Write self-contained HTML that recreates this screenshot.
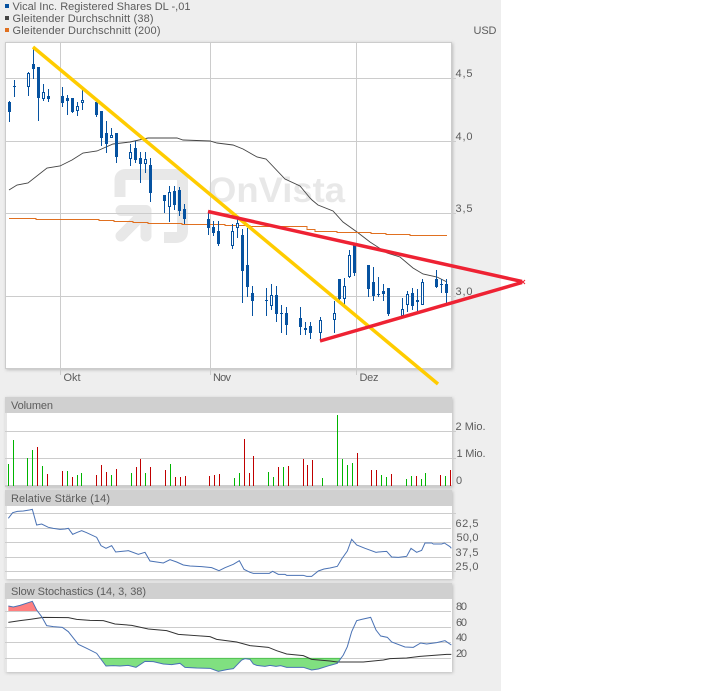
<!DOCTYPE html>
<html><head><meta charset="utf-8"><style>
html,body{margin:0;padding:0;background:#fff}
svg{display:block}
text{font-family:"Liberation Sans",sans-serif;font-size:11px;fill:#5c5c5c}
</style></head><body>
<svg width="725" height="691" viewBox="0 0 725 691" xmlns="http://www.w3.org/2000/svg">
<defs><filter id="s" x="-5%" y="-5%" width="110%" height="110%"><feDropShadow dx="1" dy="1" stdDeviation="1.5" flood-color="#999" flood-opacity=".6"/></filter></defs>
<rect width="501" height="691" fill="#eee"/>

<!-- legend -->
<rect x="5" y="4" width="4" height="4" fill="#0652a0"/>
<rect x="5" y="16" width="4" height="4" fill="#444"/>
<rect x="5" y="28" width="4" height="4" fill="#e07020"/>
<text x="12.5" y="10" textLength="178" lengthAdjust="spacing">Vical Inc. Registered Shares DL -,01</text>
<text x="12.5" y="22" textLength="141" lengthAdjust="spacing">Gleitender Durchschnitt (38)</text>
<text x="12.5" y="34" textLength="148" lengthAdjust="spacing">Gleitender Durchschnitt (200)</text>
<text x="473.5" y="34" textLength="23" lengthAdjust="spacing">USD</text>

<!-- main panel -->
<rect x="5.5" y="42.5" width="446" height="326" fill="#fff" stroke="#ccc" filter="url(#s)"/>
<g fill="none" stroke="#e8e8e8" stroke-width="11">
<path d="M120 197V180Q120 174.500 126 174.500H176Q182.500 174.500 182.500 181V231Q182.500 237.500 176 237.500H164" stroke-linecap="butt"/>
<path d="M121 210.500H146V236M146 211L121 236" stroke-linecap="round" stroke-linejoin="round"/>
</g>
<text x="208" y="202" textLength="137" lengthAdjust="spacingAndGlyphs" style="font-size:35px;font-weight:bold;fill:#e8e8e8">OnVista</text>
<path d="M5 78.500H456M5 141.500H456M5 213.500H456M5 296.500H456M60.500 42V375M210.500 42V375M356.500 42V375" stroke="#ccc" fill="none"/>

<!-- moving averages -->
<path fill="none" stroke="#444" stroke-width=".9" d="M9 190L17 185L28 183L47 168L60 166L72 160L83 153L97 151L113 144L130 142L148 138L177 138L183 140L210 141L217 143L233 145L243 149L250 153L257 157L266 159L285 179L300 186L310 198L312 200L318 205L333 211L343 222L357 232L370 242L387 253L400 257L413 268L423 274L437 277L447 282"/>
<path fill="none" stroke="#e07020" stroke-width="1" d="M9 218.500H36V219.500H99V220.500H114V221.500H133V222.500H148V223.500H182V224.500H225V225.500H250V226.500H307V229.500H315V231.500H337V232.500H371V233.500H386V234.500H410V235.500H447"/>

<!-- candles -->
<path fill="none" stroke="#0652a0" d="M9.500 101V122M14.500 80V97M28.500 72V96M33.500 49V79M38.500 67V121M43.500 84V101M48.500 89V102M62.500 87V107M67.500 95V115M72.500 98V113M77.500 102V116M82.500 89V110M96.500 100V117M101.500 111V146M106.500 121V153M111.500 128V138M116.500 133V163M130.500 144V166M135.500 141V163M140.500 152V183M145.500 152V173M150.500 158V202M164.500 195V213M169.500 186V222M174.500 186V210M179.500 187V216M184.500 204V224M208.500 212V235M213.500 221V236M218.500 221V246M232.500 224V249M237.500 218V238M242.500 229V303M247.500 228V297M252.500 286V316M266.500 288V316M271.500 284V310M276.500 286V322M281.500 305V333M286.500 307V335M300.500 307V335M305.500 322V335M310.500 322V339M320.500 317V341M334.500 301V333M339.500 279V300M344.500 278V305M349.500 250V278M354.500 243V276M368.500 265V297M373.500 267V301M378.500 277V297M383.500 284V301M388.500 288V316M402.500 298V316M407.500 291V312M412.500 288V310M417.500 289V311M422.500 279V305M436.500 270V288M441.500 279V293M446.500 279V305"/>
<path fill="#0652a0" d="M8 102h3v10h-3zM13 86h3v1h-3zM32 64h3v5h-3zM37 67h3v31h-3zM47 96h3v3h-3zM61 96h3v7h-3zM66 98h3v3h-3zM71 98h3v14h-3zM95 102h3v13h-3zM100 111h3v27h-3zM105 133h3v11h-3zM115 133h3v24h-3zM134 148h3v12h-3zM139 158h3v6h-3zM149 165h3v28h-3zM163 195h3v6h-3zM173 191h3v14h-3zM178 190h3v21h-3zM183 209h3v10h-3zM207 219h3v9h-3zM212 227h3v6h-3zM217 231h3v13h-3zM241 235h3v36h-3zM246 265h3v22h-3zM251 293h3v8h-3zM265 300h3v1h-3zM275 295h3v19h-3zM280 313h3v1h-3zM285 313h3v12h-3zM299 318h3v9h-3zM304 328h3v2h-3zM309 326h3v7h-3zM338 279h3v20h-3zM353 243h3v30h-3zM367 265h3v24h-3zM372 282h3v14h-3zM377 294h3v1h-3zM382 291h3v3h-3zM387 288h3v26h-3zM411 293h3v13h-3zM435 279h3v8h-3zM440 284h3v1h-3zM445 284h3v9h-3z"/>
<path fill="#fff" stroke="#0652a0" d="M27.500 73.500h2v13h-2zM42.500 92.500h2v6h-2zM76.500 106.500h2v4h-2zM81.500 100.500h2v2h-2zM110.500 135.500h2v2h-2zM129.500 152.500h2v6h-2zM144.500 159.500h2v4h-2zM168.500 192.500h2v14h-2zM231.500 231.500h2v14h-2zM236.500 223.500h2v4h-2zM270.500 295.500h2v10h-2zM319.500 320.500h2v12h-2zM333.500 313.500h2v6h-2zM343.500 286.500h2v12h-2zM348.500 255.500h2v21h-2zM401.500 309.500h2v6h-2zM406.500 294.500h2v10h-2zM416.500 300.500h2v1h-2zM421.500 282.500h2v22h-2z"/>

<!-- trend lines -->
<path d="M33 47L438 384" stroke="#fc0" stroke-width="3.500" fill="none"/>
<path d="M208 211.500L522 281.500M522 282.500L320 341" stroke="#ee2233" stroke-width="3.500" fill="none"/>
<path d="M521 280L525 284M525 280L521 284" stroke="#ee2233" stroke-width="1" fill="none"/>

<!-- main labels -->
<text x="455.500" y="77" textLength="17" lengthAdjust="spacing">4,5</text>
<text x="455.500" y="140" textLength="17" lengthAdjust="spacing">4,0</text>
<text x="455.500" y="212" textLength="17" lengthAdjust="spacing">3,5</text>
<text x="455.500" y="295" textLength="17" lengthAdjust="spacing">3,0</text>
<text x="63.500" y="381" textLength="17" lengthAdjust="spacing">Okt</text>
<text x="213" y="381" textLength="18" lengthAdjust="spacing">Nov</text>
<text x="359.500" y="381" textLength="19" lengthAdjust="spacing">Dez</text>

<!-- volume panel -->
<rect x="5" y="397" width="447" height="90" fill="#fff" filter="url(#s)"/>
<rect x="5" y="397" width="447" height="16" fill="#d0d0d0"/>
<rect x="5.500" y="413" width="1" height="73" fill="#ccc"/>
<path d="M5 431.500H456M5 458.500H456" stroke="#ccc"/>
<rect x="5" y="485" width="447" height="2" fill="#ccc"/>
<text x="11" y="409" textLength="42" lengthAdjust="spacing">Volumen</text>
<path fill="none" stroke="#00b400" d="M8.500 464V486M13.500 440V486M27.500 458V486M32.500 450V486M42.500 466V486M67.500 471V486M77.500 475V486M81.500 473V486M111.500 475V486M131.500 473V486M145.500 473V486M170.500 464V486M234.500 478V486M239.500 473V486M268.500 472V486M273.500 477V486M283.500 467V486M322.500 478V486M337.500 415V486M342.500 459V486M347.500 465V486M352.500 463V486M381.500 475V486M386.500 477V486M406.500 479V486M411.500 476V486M421.500 479V486M425.500 473V486M445.500 476V486"/>
<path fill="none" stroke="#c00000" d="M37.500 447V486M47.500 474V486M62.500 471V486M72.500 477V486M96.500 475V486M101.500 465V486M106.500 472V486M116.500 469V486M136.500 467V486M140.500 459V486M150.500 467V486M165.500 470V486M175.500 477V486M180.500 477V486M185.500 476V486M209.500 476V486M214.500 475V486M219.500 474V486M244.500 439V486M249.500 473V486M253.500 456V486M278.500 467V486M288.500 466V486M303.500 459V486M307.500 465V486M312.500 460V486M357.500 453V486M371.500 470V486M376.500 470V486M391.500 474V486M416.500 476V486M440.500 475V486M450.500 470V486"/>
<text x="455.500" y="430" textLength="30" lengthAdjust="spacing">2 Mio.</text>
<text x="456.500" y="457" textLength="29" lengthAdjust="spacing">1 Mio.</text>
<text x="456" y="484">0</text>

<!-- RSI panel -->
<rect x="5" y="490" width="447" height="89" fill="#fff" filter="url(#s)"/>
<rect x="5" y="490" width="447" height="16" fill="#d0d0d0"/>
<rect x="5.500" y="506" width="1" height="73" fill="#ccc"/>
<path d="M5 513.500H456M5 528.500H451M5 542.500H451M5 557.500H451M5 571.500H456" stroke="#ccc"/>
<text x="11" y="502" textLength="99" lengthAdjust="spacing">Relative Stärke (14)</text>
<g transform="translate(0 490) scale(.33333)" fill="none" stroke="#4a72b4" stroke-width="3">
<path d="M25 85L38 68L52 64L70 63L88 60L97 58L110 105L125 102L145 112L160 115L180 118L195 117L205 115L218 133L232 127L245 122L260 128L290 142L303 167L318 175L335 167L347 186L365 184L385 182L415 193L435 187L450 213L470 216L490 219L510 209L530 216L550 225L570 228L605 230L635 233L657 242L675 233L700 223L718 212L732 238L750 247L760 250L808 250L818 244L835 253L855 253L860 256L910 256L920 259L935 259L955 243L972 237L990 234L1012 229L1025 207L1042 183L1055 148L1070 165L1095 175L1128 187L1135 186L1160 184L1175 201L1195 202L1220 199L1233 175L1250 187L1265 181L1275 159L1295 159L1300 162L1325 162L1333 159L1350 170L1354 175"/>
</g>
<text x="455.500" y="527" textLength="23" lengthAdjust="spacing">62,5</text>
<text x="456.500" y="541" textLength="22" lengthAdjust="spacing">50,0</text>
<text x="455.500" y="556" textLength="23" lengthAdjust="spacing">37,5</text>
<text x="455.500" y="570" textLength="23" lengthAdjust="spacing">25,0</text>

<!-- Stochastics panel -->
<rect x="5" y="583" width="447" height="89" fill="#fff" filter="url(#s)"/>
<rect x="5" y="583" width="447" height="16" fill="#d0d0d0"/>
<rect x="5.500" y="599" width="1" height="73" fill="#ccc"/>
<path d="M5 611.500H451M5 627.500H451M5 642.500H451M5 658.500H451" stroke="#ccc"/>
<text x="11" y="595" textLength="135" lengthAdjust="spacing">Slow Stochastics (14, 3, 38)</text>
<g transform="translate(0 580) scale(.33333)">
<path fill="#ff8080" d="M25 78L40 81L60 76L97 64L112 93L25 93Z"/>
<path fill="#80e080" d="M300 235L318 258L340 257L360 258L385 256L408 262L435 244L460 245L490 252L515 254L540 250L555 262L590 264L630 265L655 274L680 269L700 266L725 240L735 236L750 238L760 252L770 256L795 259L810 256L828 259L842 257L860 262L910 262L935 270L955 267L990 256L1012 250L1022 235Z"/>
<path fill="none" stroke="#50c050" stroke-width="3" d="M300 235H1022"/>
<path fill="none" stroke="#333" stroke-width="3" d="M25 127L60 122L90 118L130 112L205 113L230 118L270 121L310 122L345 132L395 136L445 147L500 152L535 163L630 170L650 178L710 186L750 197L805 202L830 212L860 222L910 227L935 238L990 243L1012 246L1090 246L1150 240L1170 236L1220 234L1260 229L1300 226L1340 223L1354 223"/>
<path fill="none" stroke="#4a72b4" stroke-width="3" d="M25 78L40 81L60 76L97 64L110 90L125 110L140 137L160 140L187 142L205 155L235 193L260 205L290 220L318 258L340 257L360 258L385 256L408 262L435 244L460 245L490 252L515 254L540 250L555 262L590 264L630 265L655 274L680 269L700 266L725 240L735 236L750 238L760 252L770 256L795 259L810 256L828 259L842 257L860 262L910 262L935 270L955 267L990 256L1012 250L1030 225L1042 200L1055 155L1070 122L1085 118L1112 112L1128 150L1142 168L1162 172L1175 186L1215 201L1240 202L1262 189L1280 192L1310 188L1335 182L1354 195"/>
</g>
<text x="456" y="610" textLength="11" lengthAdjust="spacing">80</text>
<text x="456" y="626" textLength="11" lengthAdjust="spacing">60</text>
<text x="456" y="641" textLength="11" lengthAdjust="spacing">40</text>
<text x="456" y="657" textLength="11" lengthAdjust="spacing">20</text>
</svg>
</body></html>
